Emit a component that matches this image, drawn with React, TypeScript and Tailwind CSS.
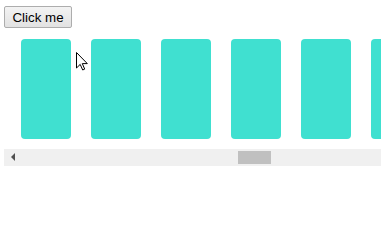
const cards = Array.from({ length: 6 }, (_, i) => i);

const Cursor = () => (
  <svg width="12" height="19" viewBox="0 0 12 19" className="block">
    <path
      d="M0.5 0.5 L0.5 16 L4.2 12.4 L6.7 18 L8.7 17.1 L6.3 11.6 L11.3 11.6 Z"
      fill="#ffffff"
      stroke="#000000"
      strokeWidth="1"
      strokeLinejoin="miter"
    />
  </svg>
);

export default function App() {
  return (
    <div className="relative w-full h-[231px] overflow-hidden bg-white font-['Liberation_Sans',Arial,sans-serif]">
      <button className="ml-[4px] mt-[6px] w-[68px] h-[22px] border border-[#adadad] rounded-[2px] bg-gradient-to-b from-[#f3f3f3] to-[#e2e2e2] text-[13.333px] leading-[15px] text-black">
        Click me
      </button>

      <div className="ml-[4px]">
        <div className="overflow-hidden py-[10px]">
          <div className="flex gap-[20px] pl-[17px]">
            {cards.map((i) => (
              <div key={i} className="shrink-0 w-[50px] h-[100px] rounded-[4px] bg-[#40e0d0]" />
            ))}
          </div>
        </div>
        {/* horizontal scrollbar */}
        <div className="flex h-[17px] bg-[#f0f0f0]">
          <div className="w-[17px] flex items-center justify-center">
            <div className="w-0 h-0 border-y-[4px] border-y-transparent border-r-[4px] border-r-[#505050]" />
          </div>
          <div className="ml-[217px] mt-[2px] w-[33px] h-[13px] bg-[#c0c0c0]" />
        </div>
      </div>

      <div className="absolute left-[76px] top-[52px]">
        <Cursor />
      </div>
    </div>
  );
}
